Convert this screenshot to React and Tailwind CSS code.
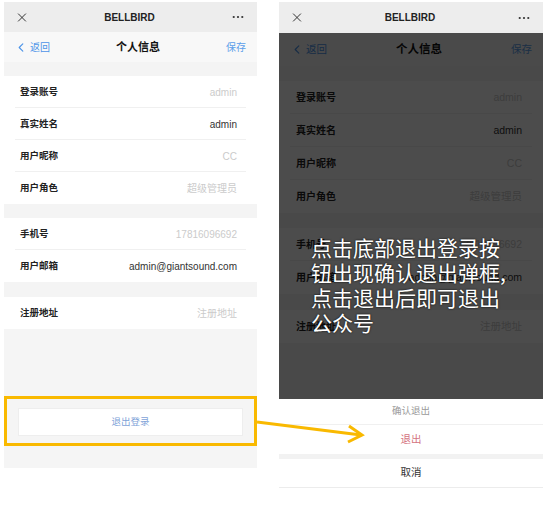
import React from "react";

const font = "font-['Liberation_Sans','Noto_Sans_CJK_SC',sans-serif]";

function XIcon({ className }) {
  return (
    <svg viewBox="0 0 10 10" className={className} fill="none" stroke="#333" strokeWidth="1.1" strokeLinecap="round">
      <path d="M1 1 L9 9 M9 1 L1 9" />
    </svg>
  );
}

function Dots({ className }) {
  return (
    <svg viewBox="0 0 14 4" className={className} fill="#333">
      <circle cx="2" cy="2" r="1.3" />
      <circle cx="7" cy="2" r="1.3" />
      <circle cx="12" cy="2" r="1.3" />
    </svg>
  );
}

function Chevron({ className }) {
  return (
    <svg viewBox="0 0 6 10" className={className} fill="none" stroke="#4d94e8" strokeWidth="1.3" strokeLinecap="round" strokeLinejoin="round">
      <path d="M5 1 L1 5 L5 9" />
    </svg>
  );
}

function Row({ label, value, muted, rowClass, textClass, valueClass, divider }) {
  return (
    <div className={`relative flex items-center justify-between bg-white ${rowClass}`}>
      <span className={`font-semibold text-[#222] ${textClass}`}>{label}</span>
      <span className={`${valueClass} ${muted ? "text-[#cbcbcb]" : "text-[#333]"}`}>{value}</span>
      {divider && <div className="absolute bottom-0 left-[11px] right-[11px] h-px bg-[#f0f0f0]" />}
    </div>
  );
}

function PageContent({ v }) {
  const p = { rowClass: v.row, textClass: v.text, valueClass: v.value };
  return (
    <>
      <div className={`flex items-center justify-between bg-[#f8f8f8] ${v.nav}`}>
        <div className="flex items-center gap-[6px]">
          <Chevron className="w-[6px] h-[9px]" />
          <span className={`text-[#4d94e8] ${v.small}`}>返回</span>
        </div>
        <span className={`font-bold text-[#111] ${v.title}`}>个人信息</span>
        <span className={`text-[#5c9fea] ${v.small}`}>保存</span>
      </div>
      <div className={`bg-[#f4f4f4] ${v.band1}`} />
      <Row label="登录账号" value="admin" muted divider {...p} />
      <Row label="真实姓名" value="admin" divider {...p} />
      <Row label="用户昵称" value="CC" muted divider {...p} />
      <Row label="用户角色" value="超级管理员" muted {...p} />
      <div className={`bg-[#f4f4f4] ${v.band2}`} />
      <Row label="手机号" value="17816096692" muted divider {...p} />
      <Row label="用户邮箱" value="admin@giantsound.com" {...p} />
      <div className={`bg-[#f4f4f4] ${v.band3}`} />
      <Row label="注册地址" value="注册地址" muted {...p} />
    </>
  );
}

const leftV = {
  nav: "h-[30px] pl-[14px] pr-[11px]",
  small: "text-[10px]",
  title: "text-[11px]",
  band1: "h-[14px]",
  band2: "h-[14px]",
  band3: "h-[15px]",
  row: "h-[32px] pl-[16px] pr-[20px]",
  text: "text-[9.5px]",
  value: "text-[10px]",
};

const rightV = {
  nav: "h-[33px] pl-[15px] pr-[11px]",
  small: "text-[10.5px]",
  title: "text-[11.5px]",
  band1: "h-[15px]",
  band2: "h-[15px]",
  band3: "h-[16px]",
  row: "h-[33px] pl-[17px] pr-[21px]",
  text: "text-[10px]",
  value: "text-[10.5px]",
};

function TopBar({ h }) {
  return (
    <div className={`flex items-center justify-between bg-[#ededed] px-[13px] ${h}`}>
      <XIcon className="w-[10px] h-[9px]" />
      <span className="font-bold text-[10px] text-[#222]">BELLBIRD</span>
      <Dots className="w-[12px] h-[4px]" />
    </div>
  );
}

export default function App() {
  return (
    <div className={`relative w-[548px] h-[507px] bg-white overflow-hidden ${font}`}>
      <div className="flex pl-[4px] pt-[2px] gap-[22px]">
        {/* Left phone */}
        <div className="w-[253px] flex flex-col">
          <TopBar h="h-[30px]" />
          <PageContent v={leftV} />
          <div className="h-[139px] bg-[#f5f5f5] flex flex-col">
            <div className="mt-[79px] mx-[14px] h-[28px] bg-white flex items-center justify-center border border-[#eeeeee]">
              <span className="text-[9.5px] text-[#7ea3d8]">退出登录</span>
            </div>
          </div>
        </div>

        {/* Right phone */}
        <div className="w-[264px] flex flex-col">
          <TopBar h="h-[31px]" />
          <div className="relative h-[366px] flex flex-col bg-[#f5f5f5]">
            <PageContent v={rightV} />
            <div className="absolute inset-0 bg-black/70" />
            <div className="absolute left-[32px] top-[202px] text-white text-[21px] leading-[25px] whitespace-nowrap font-['Noto_Sans_CJK_SC',sans-serif] [text-shadow:0_0_2px_#000]">
              点击底部退出登录按<br />
              钮出现确认退出弹框,<br />
              点击退出后即可退出<br />
              公众号
            </div>
          </div>
          <div className="bg-white">
            <div className="h-[26px] flex items-center justify-center border-b border-[#f0f0f0]">
              <span className="text-[9.5px] text-[#9a9a9a]">确认退出</span>
            </div>
            <div className="h-[29px] flex items-center justify-center">
              <span className="text-[10.5px] text-[#d4737f]">退出</span>
            </div>
            <div className="h-[5px] bg-[#f2f2f2]" />
            <div className="h-[29px] flex items-center justify-center border-b border-[#ececec]">
              <span className="text-[10.5px] text-[#333]">取消</span>
            </div>
          </div>
        </div>
      </div>

      {/* Annotation box */}
      <div className="absolute left-[4px] top-[396px] w-[253px] h-[50px] border-[3px] border-[#f9b900]" />
      <svg className="absolute left-0 top-0 w-[548px] h-[507px] pointer-events-none" viewBox="0 0 548 507">
        <path d="M257 422 L361 435" stroke="#f9b900" strokeWidth="3" fill="none" />
        <path d="M349 426 L362 435 L348 442" stroke="#f9b900" strokeWidth="3" fill="none" strokeLinejoin="miter" />
      </svg>
    </div>
  );
}
